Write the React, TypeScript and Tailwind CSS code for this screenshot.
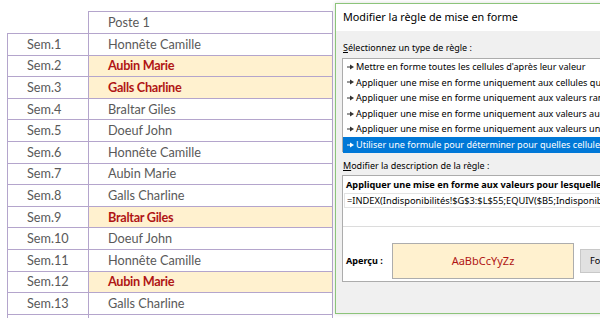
const rows: [string, string, boolean][] = [
  ['Sem.1', 'Honnête Camille', false],
  ['Sem.2', 'Aubin Marie', true],
  ['Sem.3', 'Galls Charline', true],
  ['Sem.4', 'Braltar Giles', false],
  ['Sem.5', 'Doeuf John', false],
  ['Sem.6', 'Honnête Camille', false],
  ['Sem.7', 'Aubin Marie', false],
  ['Sem.8', 'Galls Charline', false],
  ['Sem.9', 'Braltar Giles', true],
  ['Sem.10', 'Doeuf John', false],
  ['Sem.11', 'Honnête Camille', false],
  ['Sem.12', 'Aubin Marie', true],
  ['Sem.13', 'Galls Charline', false],
  ['Sem.14', 'Braltar Giles', false],
];

const ruleTypes = [
  "Mettre en forme toutes les cellules d'après leur valeur",
  'Appliquer une mise en forme uniquement aux cellules qui contiennent',
  'Appliquer une mise en forme uniquement aux valeurs rangées parmi les premières ou les dernières valeurs',
  'Appliquer une mise en forme uniquement aux valeurs au-dessus ou en dessous de la moyenne',
  'Appliquer une mise en forme uniquement aux valeurs uniques ou aux doublons',
  'Utiliser une formule pour déterminer pour quelles cellules le format sera appliqué',
];

function Arrow({ white }: { white?: boolean }) {
  const c = white ? '#ffffff' : '#333333';
  return (
    <svg width="7" height="6" viewBox="0 0 7 6" className="mr-[2px] shrink-0">
      <line x1="0" y1="3" x2="4" y2="3" stroke={c} strokeWidth="1" />
      <polygon points="3,0.5 7,3 3,5.5" fill={c} />
    </svg>
  );
}

function Sheet() {
  return (
    <div className="ml-[7px] mt-[11px] w-[326px] shrink-0 text-[12.7px] text-[#595959] [font-family:Lato,'Noto_Sans',sans-serif]">
      <div className="flex h-[22px]">
        <div className="w-[81px]" />
        <div className="flex flex-1 items-center border-x border-t border-[#b4a5cc] pl-[19px]">Poste 1</div>
      </div>
      {rows.map(([week, name, hot]) => (
        <div key={week} className="flex h-[21.6px] border-t border-[#b4a5cc]">
          <div className="flex w-[81px] items-center border-l border-[#b4a5cc] pl-[19px]">{week}</div>
          <div
            className={`flex flex-1 items-center border-x border-[#b4a5cc] pl-[19px] ${
              hot ? 'bg-[#fff1cf] font-bold tracking-[-0.3px] text-[#b01515]' : ''
            }`}
          >
            {name}
          </div>
        </div>
      ))}
    </div>
  );
}

function RuleDialog() {
  return (
    <div className="ml-[2px] mt-[3px] flex h-[311px] w-[420px] shrink-0 flex-col border border-[#8cc47a] bg-[#f0f0f0] text-[9.1px] text-black shadow-[0_0_4px_rgba(0,0,0,0.15)] [font-family:'Segoe_UI','Noto_Sans',sans-serif]">
      <div className="flex h-[27px] items-center bg-white pl-[7px] text-[10.8px]">Modifier la règle de mise en forme</div>
      <div className="flex flex-1 flex-col px-[6px] pt-[9px]">
        <div className="pl-[1px] text-[9px] leading-[16px]">
          <span className="underline">S</span>électionnez un type de règle :
        </div>
        <div className="mt-[2px] h-[94px] whitespace-nowrap border border-[#acacac] bg-white">
          {ruleTypes.map((t, i) => (
            <div
              key={t}
              className={`flex h-[15.6px] items-center pl-[4px] ${i === 5 ? 'bg-[#0078d7] text-white' : ''}`}
            >
              <Arrow white={i === 5} />
              {t}
            </div>
          ))}
        </div>
        <div className="mt-[6px] pl-[1px] text-[9px] leading-[16px]">
          <span className="underline">M</span>odifier la description de la règle :
        </div>
        <div className="mt-[1px] h-[107px] whitespace-nowrap border border-[#acacac] bg-white">
          <div className="px-[3px] pt-[2px] text-[9.2px] font-bold leading-[14px]">
            Appliquer une mise en forme aux valeurs pour lesquelles cette formule est vraie :
          </div>
          <div className="mx-[1px] mt-[1px] flex h-[15px] items-center border border-[#e3e3e3] pl-[2px] text-[9.3px]">
            =INDEX(Indisponibilités!$G$3:$L$55;EQUIV($B5;Indisponibilités!$B$3:$B$55;0);EQUIV(C$4;Indisponibilités!$G$2:$L$2;0))
          </div>
          <div className="mt-[18px] border-t border-[#dcdcdc]" />
          <div className="flex items-center pl-[3px] pt-[16px]">
            <span className="w-[46px] font-bold">Aperçu :</span>
            <div className="flex h-[36px] w-[182px] items-center justify-center border border-[#adadad] bg-[#fff1cf] text-[11px] text-[#b01515]">
              AaBbCcYyZz
            </div>
            <div className="ml-[6px] flex h-[24px] w-[70px] items-center border border-[#c8c8c8] bg-[#e1e1e1] pl-[9px]">
              Format...
            </div>
          </div>
        </div>
      </div>
    </div>
  );
}

export default function App() {
  return (
    <div className="flex h-[318px] w-[600px] overflow-hidden bg-white">
      <Sheet />
      <RuleDialog />
    </div>
  );
}
